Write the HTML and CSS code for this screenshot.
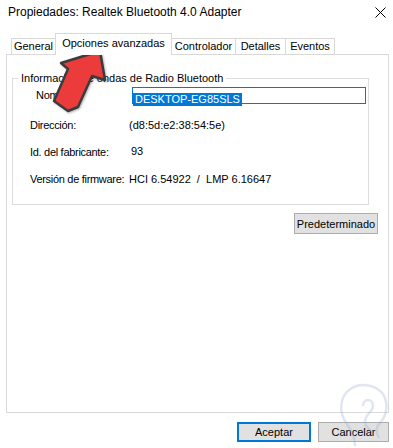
FILE: index.html
```html
<!DOCTYPE html>
<html lang="es">
    <head>
        <meta charset="UTF-8">
        <title>Propiedades: Realtek Bluetooth 4.0 Adapter</title>
        <link rel="stylesheet" href="styles.css">
    </head>
    <body>
        <div class="dialog">

            <div class="titlebar">
                <span class="title">Propiedades: Realtek Bluetooth 4.0 Adapter</span>
                <svg class="close" width="11" height="11" viewBox="0 0 11 11">
                    <path d="M0.5 0.5 L10.5 10.5 M10.5 0.5 L0.5 10.5" stroke="#000" stroke-width="1" fill="none"/>
                </svg>
            </div>

            <div class="tabs">
                <div class="tab t1">General</div>
                <div class="tab t2 active">Opciones avanzadas</div>
                <div class="tab t3">Controlador</div>
                <div class="tab t4">Detalles</div>
                <div class="tab t5">Eventos</div>
            </div>

            <div class="panel">
                <div class="group">
                    <span class="legend">Información de ondas de Radio Bluetooth</span>
                    <div class="info">
                        <span class="lbl lbl-nombre">Nombre:</span>
                        <div class="txt"><span class="sel">DESKTOP-EG85SLS</span></div>

                        <span class="lbl">Dirección:</span>
                        <span class="val">(d8:5d:e2:38:54:5e)</span>

                        <span class="lbl">Id. del fabricante:</span>
                        <span class="val val-id">93</span>

                        <span class="lbl">Versión de firmware:</span>
                        <span class="val">HCI 6.54922&nbsp; /&nbsp; LMP 6.16647</span>
                    </div>
                </div>
                <div class="panel-actions">
                    <button class="btn btn-pre">Predeterminado</button>
                </div>
            </div>

            <div class="footer">
                <button class="btn btn-ok">Aceptar</button>
                <button class="btn btn-cancel">Cancelar</button>
            </div>

            <!-- flecha roja encima de la pestaña -->
            <svg class="arrow" width="393" height="448" viewBox="0 0 393 448">
                <polygon points="100,51 105,80 92,76 78,107 68,111 54,101 68,69 61,63"
                         fill="#ec3b3b" stroke="#3b3b3b" stroke-width="2.5" stroke-linejoin="round"/>
            </svg>

            <!-- marca de agua -->
            <svg class="watermark" width="60" height="72" viewBox="0 0 60 72">
                <path d="M22 70 C22 60 18 54 14 48 C6 38 6 22 16 14 C26 6 42 8 50 18 C56 28 54 40 46 48 C42 52 44 58 46 62"
                      fill="none" stroke="#9aa9cc" stroke-width="2.5" opacity="0.3"/>
                <path d="M30 30 C30 22 40 22 40 30 C40 36 32 38 32 46 C32 52 38 54 40 56"
                      fill="none" stroke="#9aa9cc" stroke-width="2.5" opacity="0.3"/>
            </svg>
        </div>
    </body>
</html>
```

FILE: styles.css
```css
body {
    margin: 0;
    background-color: #ffffff;
    font-family: "Liberation Sans", Arial, sans-serif;
    color: #000000;
}

.dialog {
    position: relative;
    width: 393px;
    height: 448px;
    overflow: hidden;
    display: flex;
    flex-direction: column;
}

/* barra de titulo */
.titlebar {
    height: 33px;
    display: flex;
    align-items: flex-start;
    padding: 5px 0 0 8px;
    box-sizing: border-box;
}

.title {
    font-size: 12px;
    line-height: 14px;
}

.close {
    margin-left: auto;
    margin-right: 7px;
    margin-top: 2px;
}

/* pestañas */
.tabs {
    display: flex;
    align-items: flex-end;
    height: 21px;
    margin-left: 11px;
}

.tab {
    box-sizing: border-box;
    height: 16px;
    border: 1px solid #d9d9d9;
    border-bottom: none;
    margin-left: -1px;
    font-size: 11px;
    line-height: 15px;
    text-align: center;
    white-space: nowrap;
    background-color: #ffffff;
}

.tab.t1 { width: 45px; margin-left: 0; }
.tab.t2 { width: 117px; }
.tab.t3 { width: 65px; }
.tab.t4 { width: 51px; }
.tab.t5 { width: 50px; }

.tab.active {
    position: relative;
    z-index: 1;
    height: 22px;
    margin-bottom: -1px;
    line-height: 18px;
}

/* panel */
.panel {
    box-sizing: border-box;
    width: 383px;
    height: 359px;
    margin-left: 6px;
    border: 1px solid #d9d9d9;
    display: flex;
    flex-direction: column;
}

.group {
    box-sizing: border-box;
    height: 127px;
    margin: 23px 19px 0 5px;
    border: 1px solid #dcdcdc;
    display: flex;
    flex-direction: column;
}

.legend {
    align-self: flex-start;
    margin: -8px 0 0 5px;
    padding: 0 3px;
    background-color: #ffffff;
    font-size: 11px;
    line-height: 14px;
    white-space: nowrap;
}

.info {
    display: grid;
    grid-template-columns: 99px 1fr;
    grid-template-rows: 30px 27px 27px 17px;
    align-items: start;
    margin-top: 2px;
    padding-left: 17px;
}

.lbl, .val {
    font-size: 11px;
    line-height: 17px;
    white-space: nowrap;
}

.lbl {
    letter-spacing: -0.3px;
}

.lbl-nombre {
    padding-left: 6px;
}

.val-id {
    padding-left: 2px;
    margin-top: -1px;
}

.txt {
    box-sizing: border-box;
    width: 234px;
    height: 17px;
    margin-left: 3px;
    border: 1px solid #0078d7;
    padding: 1px 0 0 0;
}

.sel {
    display: inline-block;
    background-color: #0078d7;
    color: #ffffff;
    font-size: 11px;
    line-height: 13px;
    padding: 0 2px;
}

.panel-actions {
    display: flex;
    justify-content: flex-end;
    margin: 8px 10px 0 0;
}

/* botones */
.btn {
    box-sizing: border-box;
    height: 21px;
    padding: 0;
    border: 1px solid #adadad;
    background-color: #e1e1e1;
    font-family: "Liberation Sans", Arial, sans-serif;
    font-size: 11px;
    color: #000000;
}

.btn-pre {
    width: 84px;
}

.footer {
    display: flex;
    justify-content: flex-end;
    gap: 7px;
    margin-top: 9px;
    padding-right: 4px;
}

.btn-ok {
    width: 74px;
    height: 20px;
    border: 2px solid #0078d7;
}

.btn-cancel {
    width: 71px;
    height: 20px;
}

.arrow {
    position: absolute;
    left: 0;
    top: 0;
    pointer-events: none;
    filter: drop-shadow(1px 1px 1px rgba(0, 0, 0, 0.3));
}

.watermark {
    position: absolute;
    right: 0;
    bottom: 0;
    pointer-events: none;
}
```
